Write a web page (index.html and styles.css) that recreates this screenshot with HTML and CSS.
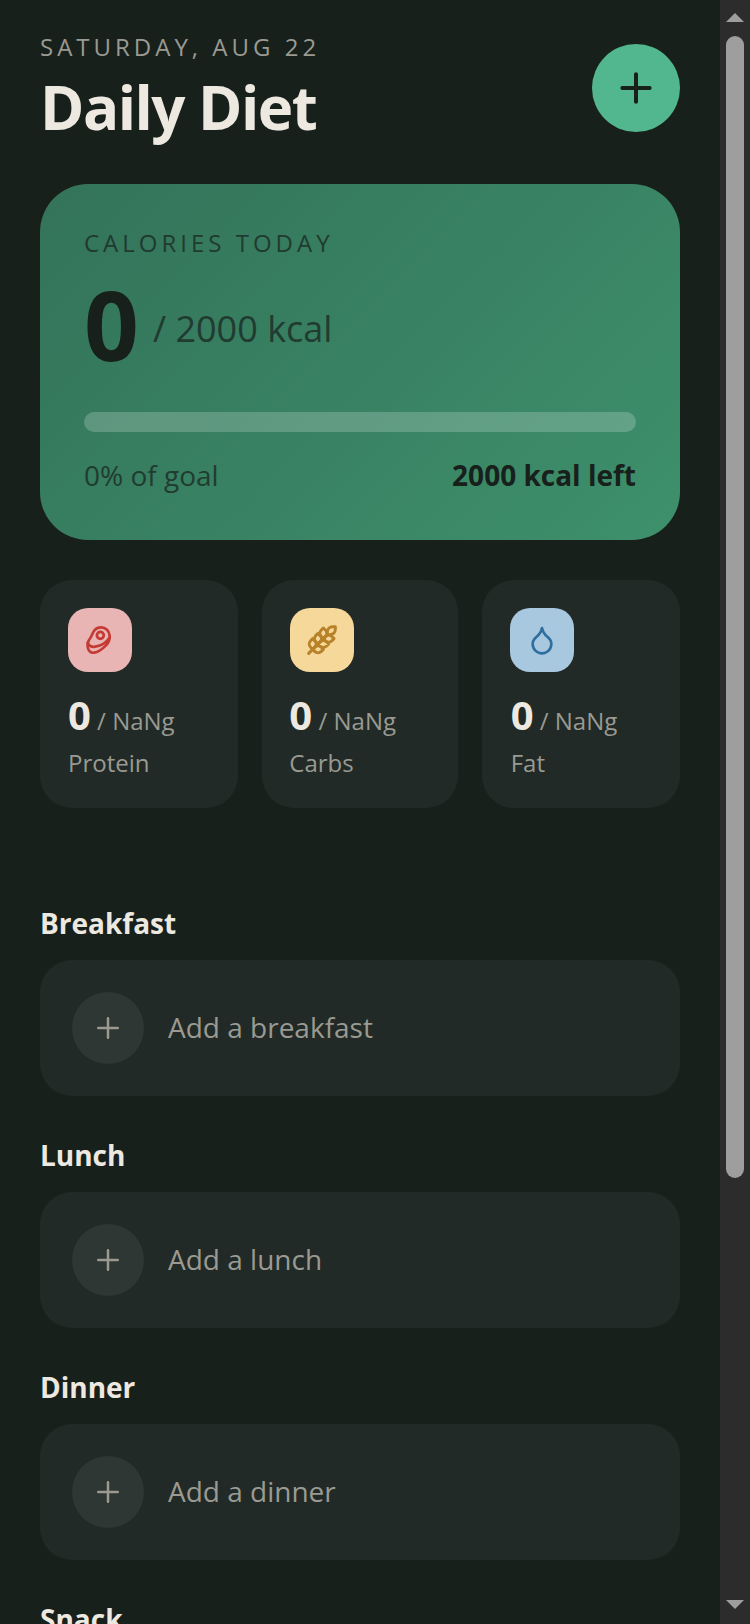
FILE: index.html
```html
<!DOCTYPE html>
<html lang="en">
<head>
    <meta charset="UTF-8">
    <meta name="viewport" content="width=device-width, initial-scale=1.0">
    <title>Daily Diet</title>
    <link rel="stylesheet" href="styles.css">
</head>
<body>
    <main class="page">
        <header class="top">
            <div>
                <p class="date">SATURDAY, AUG 22</p>
                <h1 class="title">Daily Diet</h1>
            </div>
            <button class="add-btn" aria-label="Add">
                <svg viewBox="0 0 24 24" width="32" height="32" class="plus"><path d="M12 1.75v20.5M1.75 12h20.5"/></svg>
            </button>
        </header>

        <section class="hero">
            <p class="hero-label">CALORIES TODAY</p>
            <div class="hero-value">
                <span class="hero-num">0</span>
                <span class="hero-goal">/ 2000 kcal</span>
            </div>
            <div class="track"></div>
            <div class="hero-foot">
                <span>0% of goal</span>
                <strong>2000 kcal left</strong>
            </div>
        </section>

        <section class="macros">
            <div class="macro">
                <div class="macro-icon pink">
                    <svg viewBox="0 0 24 24" width="32" height="32" class="line"><circle cx="12.25" cy="8.5" r="2.6"/><path d="M13 2.5C16 2.5 18.8 5 19.2 8.5 19.6 11.5 18.5 14 16.5 16 14 18.6 11 21 7.5 21.5 5 21.8 3.2 20 2.8 17.5 2.5 15.5 2.7 13.5 3.8 12 5.3 10.2 6 8 7 6 8.2 3.7 10.5 2.5 13 2.5Z"/><path d="M2.8 14C3.8 16.4 6 17.4 8.5 17 12.5 16.3 16.8 14 19 10.5"/></svg>
                </div>
                <p class="macro-value"><b>0</b> / NaNg</p>
                <p class="macro-name">Protein</p>
            </div>
            <div class="macro">
                <div class="macro-icon yellow">
                    <svg viewBox="0 0 24 24" width="32" height="32" class="line"><path d="M2 22 16 8"/><path d="M3.47 12.53 5 11l1.53 1.53a3.5 3.5 0 0 1 0 4.94L5 19l-1.53-1.53a3.5 3.5 0 0 1 0-4.94Z"/><path d="M7.47 8.53 9 7l1.53 1.53a3.5 3.5 0 0 1 0 4.94L9 15l-1.53-1.53a3.5 3.5 0 0 1 0-4.94Z"/><path d="M11.47 4.53 13 3l1.53 1.53a3.5 3.5 0 0 1 0 4.94L13 11l-1.53-1.53a3.5 3.5 0 0 1 0-4.94Z"/><path d="M20 2h2v2a4 4 0 0 1-4 4h-2V6a4 4 0 0 1 4-4Z"/><path d="M11.47 17.47 13 19l-1.53 1.53a3.5 3.5 0 0 1-4.94 0L5 19l1.53-1.53a3.5 3.5 0 0 1 4.94 0Z"/><path d="M15.47 13.47 17 15l-1.53 1.53a3.5 3.5 0 0 1-4.94 0L9 15l1.53-1.53a3.5 3.5 0 0 1 4.94 0Z"/><path d="M19.47 9.47 21 11l-1.53 1.53a3.5 3.5 0 0 1-4.94 0L13 11l1.53-1.53a3.5 3.5 0 0 1 4.94 0Z"/></svg>
                </div>
                <p class="macro-value"><b>0</b> / NaNg</p>
                <p class="macro-name">Carbs</p>
            </div>
            <div class="macro">
                <div class="macro-icon blue">
                    <svg viewBox="0 0 24 24" width="32" height="32" class="line"><path d="M12 22a7 7 0 0 0 7-7c0-2-1-3.9-3-5.5s-3.5-4-4-6.5c-.5 2.5-2 4.9-4 6.5C6 11.1 5 13 5 15a7 7 0 0 0 7 7z"/></svg>
                </div>
                <p class="macro-value"><b>0</b> / NaNg</p>
                <p class="macro-name">Fat</p>
            </div>
        </section>

        <section class="meals">
            <div class="meal">
                <h2>Breakfast</h2>
                <div class="meal-card">
                    <span class="meal-plus"><svg viewBox="0 0 24 24" width="24" height="24" class="plus"><path d="M2.25 12h19.5M12 2.25v19.5"/></svg></span>
                    <span class="meal-text">Add a breakfast</span>
                </div>
            </div>
            <div class="meal">
                <h2>Lunch</h2>
                <div class="meal-card">
                    <span class="meal-plus"><svg viewBox="0 0 24 24" width="24" height="24" class="plus"><path d="M2.25 12h19.5M12 2.25v19.5"/></svg></span>
                    <span class="meal-text">Add a lunch</span>
                </div>
            </div>
            <div class="meal">
                <h2>Dinner</h2>
                <div class="meal-card">
                    <span class="meal-plus"><svg viewBox="0 0 24 24" width="24" height="24" class="plus"><path d="M2.25 12h19.5M12 2.25v19.5"/></svg></span>
                    <span class="meal-text">Add a dinner</span>
                </div>
            </div>
            <div class="meal">
                <h2>Snack</h2>
                <div class="meal-card">
                    <span class="meal-plus"><svg viewBox="0 0 24 24" width="24" height="24" class="plus"><path d="M2.25 12h19.5M12 2.25v19.5"/></svg></span>
                    <span class="meal-text">Add a snack</span>
                </div>
            </div>
        </section>
    </main>

    <div class="scrollbar">
        <span class="arrow up"></span>
        <span class="thumb"></span>
        <span class="arrow down"></span>
    </div>
</body>
</html>
```

FILE: styles.css
```css
* {
    box-sizing: border-box;
}

html, body {
    height: 1624px;
    overflow: hidden;
}

body {
    font-family: 'Open Sans', sans-serif;
    background-color: #18201c;
    color: #ede9e1;
    display: flex;
    margin: 0;
}

p, h1, h2 {
    margin: 0;
}

.page {
    width: 720px;
    height: 1624px;
    padding: 31px 40px 0;
    overflow: hidden;
    flex: none;
}

/* header */
.top {
    display: flex;
    justify-content: space-between;
    align-items: flex-start;
    height: 153px;
}

.date {
    font-size: 24px;
    line-height: 32px;
    letter-spacing: 4px;
    color: #9a9a92;
}

.title {
    margin-top: 6px;
    font-size: 60px;
    line-height: 76px;
    font-weight: 700;
    letter-spacing: -1.5px;
}

.add-btn {
    width: 88px;
    height: 88px;
    margin-top: 13px;
    border: none;
    border-radius: 50%;
    background: #52b78f;
    display: flex;
    align-items: center;
    justify-content: center;
    padding: 0;
}

.plus {
    fill: none;
    stroke: #18201c;
    stroke-width: 3;
    stroke-linecap: round;
}

/* calories card */
.hero {
    height: 356px;
    padding: 43px 44px;
    border-radius: 48px;
    background: linear-gradient(135deg, #33735a, #3e906b);
    color: #18201c;
}

.hero-label {
    font-size: 24px;
    line-height: 32px;
    letter-spacing: 4px;
    opacity: 0.7;
}

.hero-value {
    display: flex;
    align-items: center;
    gap: 14px;
    height: 120px;
    margin-top: 5px;
}

.hero-num {
    font-size: 96px;
    line-height: 120px;
    font-weight: 700;
}

.hero-goal {
    margin-top: 8px;
    font-size: 36px;
    opacity: 0.7;
}

.track {
    height: 20px;
    margin-top: 28px;
    border-radius: 10px;
    background: rgba(255, 255, 255, 0.2);
}

.hero-foot {
    display: flex;
    justify-content: space-between;
    margin-top: 24px;
    font-size: 28px;
    line-height: 38px;
}

.hero-foot span {
    opacity: 0.7;
}

/* macros */
.macros {
    display: grid;
    grid-template-columns: 198px 196px 198px;
    gap: 24px;
    margin-top: 40px;
}

.macro {
    height: 228px;
    padding: 28px;
    border-radius: 32px;
    background: #212a26;
}

.macro:nth-child(2) p {
    margin-left: -0.67px;
}

.macro:nth-child(3) p {
    margin-left: 0.67px;
}

.macro-icon {
    width: 64px;
    height: 64px;
    border-radius: 20px;
    display: flex;
    align-items: center;
    justify-content: center;
}

.line {
    fill: none;
    stroke-width: 2;
    stroke-linecap: round;
    stroke-linejoin: round;
}

.pink {
    background: #e8b4b4;
}

.pink .line {
    stroke: #c43a34;
}

.yellow {
    background: #f5d89a;
}

.yellow .line {
    stroke: #b8822a;
    stroke-width: 2.25;
}

.blue {
    background: #a8c8e0;
}

.blue .line {
    stroke: #2f6f9f;
}

.macro-value {
    margin-top: 19px;
    font-size: 24px;
    line-height: 48px;
    color: #9a9a92;
}

.macro-value b {
    font-size: 40px;
    color: #ede9e1;
}

.macro-name {
    font-size: 24px;
    line-height: 36px;
    color: #9a9a92;
}

/* meal sections */
.meals {
    margin-top: 96px;
    display: flex;
    flex-direction: column;
    gap: 40px;
}

.meal h2 {
    font-size: 28px;
    line-height: 38px;
    font-weight: 700;
    margin-bottom: 18px;
}

.meal-card {
    display: flex;
    align-items: center;
    gap: 24px;
    height: 136px;
    padding: 0 32px;
    border-radius: 32px;
    background: #212a26;
    font-size: 28px;
    color: #9a9a92;
}

.meal-text {
    margin-bottom: 2px;
}

.meal-plus {
    width: 72px;
    height: 72px;
    border-radius: 50%;
    background: #2e3733;
    display: flex;
    align-items: center;
    justify-content: center;
}

.meal-plus .plus {
    stroke: #9a9a92;
    stroke-width: 2.5;
}

/* fake scrollbar, same look as the browser one in the shot */
.scrollbar {
    width: 30px;
    height: 1624px;
    flex: none;
    background: #2c2c2c;
    display: flex;
    flex-direction: column;
    align-items: center;
    padding: 13px 0 15px;
}

.thumb {
    width: 18px;
    height: 1142px;
    margin: 14px 0 auto;
    border-radius: 9px;
    background: #9e9e9e;
}

.arrow {
    width: 0;
    height: 0;
    border-left: 9px solid transparent;
    border-right: 9px solid transparent;
}

.up {
    border-bottom: 9px solid #9e9e9e;
}

.down {
    border-top: 9px solid #9e9e9e;
}
```
